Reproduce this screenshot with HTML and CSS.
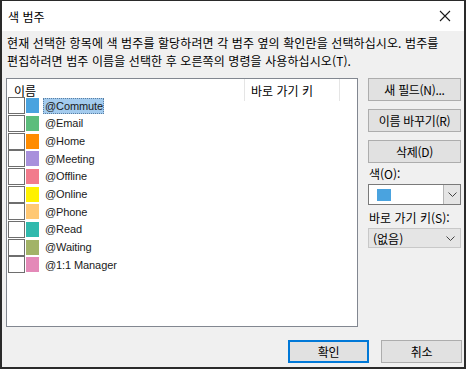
FILE: index.html
```html
<!DOCTYPE html>
<html lang="ko">

<head>
  <meta charset="UTF-8">
  <title>색 범주</title>
  <link rel="stylesheet" href="styles.css">
</head>

<body>
  <div class="dialog">
    <div class="titlebar">
      <div class="title">색 범주</div>
      <svg class="close" width="12" height="12" viewBox="0 0 12 12">
        <path d="M1 1 L11 11 M11 1 L1 11" stroke="#1a1a1a" stroke-width="1.1" fill="none"/>
      </svg>
    </div>

    <div class="content">
      <p class="desc">현재 선택한 항목에 색 범주를 할당하려면 각 범주 옆의 확인란을 선택하십시오. 범주를<br>편집하려면 범주 이름을 선택한 후 오른쪽의 명령을 사용하십시오(T).</p>

      <div class="main">
        <div class="list">
          <div class="list-head">
            <div class="col-name">이름</div>
            <div class="col-key">바로 가기 키</div>
            <div class="col-rest"></div>
          </div>
          <div class="rows">
            <div class="row"><span class="check"></span><span class="swatch c-blue"></span><span class="label selected">@Commute</span></div>
            <div class="row"><span class="check"></span><span class="swatch c-green"></span><span class="label">@Email</span></div>
            <div class="row"><span class="check"></span><span class="swatch c-orange"></span><span class="label">@Home</span></div>
            <div class="row"><span class="check"></span><span class="swatch c-purple"></span><span class="label">@Meeting</span></div>
            <div class="row"><span class="check"></span><span class="swatch c-red"></span><span class="label">@Offline</span></div>
            <div class="row"><span class="check"></span><span class="swatch c-yellow"></span><span class="label">@Online</span></div>
            <div class="row"><span class="check"></span><span class="swatch c-peach"></span><span class="label">@Phone</span></div>
            <div class="row"><span class="check"></span><span class="swatch c-teal"></span><span class="label">@Read</span></div>
            <div class="row"><span class="check"></span><span class="swatch c-olive"></span><span class="label">@Waiting</span></div>
            <div class="row"><span class="check"></span><span class="swatch c-pink"></span><span class="label">@1:1 Manager</span></div>
          </div>
        </div>

        <div class="side">
          <button class="btn">새 필드(N)...</button>
          <button class="btn">이름 바꾸기(R)</button>
          <button class="btn">삭제(D)</button>
          <div class="field-label">색(O):</div>
          <div class="combo">
            <div class="combo-field"><span class="combo-swatch"></span></div>
            <div class="combo-btn">
              <svg width="9" height="5" viewBox="0 0 9 5"><path d="M0.5 0.5 L4.5 4.5 L8.5 0.5" stroke="#444" fill="none"/></svg>
            </div>
          </div>
          <div class="field-label">바로 가기 키(S):</div>
          <div class="select">
            <span>(없음)</span>
            <svg width="9" height="5" viewBox="0 0 9 5"><path d="M0.5 0.5 L4.5 4.5 L8.5 0.5" stroke="#444" fill="none"/></svg>
          </div>
        </div>
      </div>

      <div class="footer">
        <button class="btn btn-default">확인</button>
        <button class="btn">취소</button>
      </div>
    </div>
  </div>
</body>

</html>
```

FILE: styles.css
```css
* {
  margin: 0;
  padding: 0;
  box-sizing: border-box;
}

body {
  font-family: "Noto Sans CJK KR", sans-serif;
  font-size: 12px;
  color: #000;
  background: #fff;
}

.dialog {
  width: 466px;
  height: 369px;
  border: 2px solid #2a2a2a;
  border-top-width: 1px;
  display: flex;
  flex-direction: column;
  background: #f0f0f0;
}

.titlebar {
  height: 30px;
  background: #fff;
  display: flex;
  align-items: center;
  justify-content: space-between;
  padding: 0 13px 0 6px;
}

.content {
  flex: 1;
  display: flex;
  flex-direction: column;
  padding: 3px 2px 0 4px;
}

.desc {
  line-height: 18px;
  padding-left: 1px;
  letter-spacing: 0.1px;
  white-space: nowrap;
}

.main {
  display: flex;
  margin-top: 8px;
  gap: 10px;
}

.list {
  width: 352px;
  height: 249px;
  background: #fff;
  border: 1px solid #828790;
}

.list-head {
  height: 22px;
  display: flex;
}

.list-head > div {
  display: flex;
  align-items: center;
  border-right: 1px solid #e5e5e5;
}

.col-name {
  width: 238px;
  padding-left: 7px;
}

.col-key {
  width: 95px;
  padding-left: 6px;
}

.list-head .col-rest {
  flex: 1;
  border-right: none;
}

.rows {
  margin-top: -4px;
}

.row {
  height: 17.67px;
  display: flex;
  align-items: center;
  padding-left: 1px;
}

.check {
  width: 17px;
  height: 17px;
  border: 1px solid #6e6e6e;
  background: #fff;
  flex-shrink: 0;
}

.swatch {
  width: 13px;
  height: 15px;
  margin-left: 1px;
  flex-shrink: 0;
}

.label {
  margin-left: 4px;
  padding: 0 1px 0 2px;
  line-height: 16px;
  font-family: "Liberation Sans", "Noto Sans CJK KR", sans-serif;
  font-size: 11px;
  letter-spacing: -0.1px;
  color: #1a1a1a;
}

.label.selected {
  background: #a3cbee;
  outline: 1px dotted #5a7fa3;
  outline-offset: -1px;
}

.c-blue { background: #4aa3df; }
.c-green { background: #5cbd7c; }
.c-orange { background: #ff8c00; }
.c-purple { background: #a890dc; }
.c-red { background: #f27b8c; }
.c-yellow { background: #fff100; }
.c-peach { background: #ffc874; }
.c-teal { background: #30b9ad; }
.c-olive { background: #a2b367; }
.c-pink { background: #e489b8; }

.side {
  width: 93px;
  display: flex;
  flex-direction: column;
}

.btn {
  height: 23px;
  background: #e1e1e1;
  border: 1px solid #adadad;
  font-family: "Noto Sans CJK KR", sans-serif;
  font-size: 12px;
  color: #000;
  letter-spacing: -0.3px;
}

.side .btn {
  width: 93px;
  margin-bottom: 8px;
}

.field-label {
  line-height: 14px;
  margin: -4px 0 3px 1px;
}

.combo {
  display: flex;
  height: 21px;
  border: 1px solid #7a7a7a;
  background: #fff;
  margin-bottom: 10px;
}

.combo-field {
  flex: 1;
  display: flex;
  align-items: center;
  padding-left: 8px;
}

.combo-swatch {
  width: 14px;
  height: 12px;
  background: #4aa3df;
}

.combo-btn {
  width: 17px;
  background: #e5e5e5;
  border-left: 1px solid #b5b5b5;
  display: flex;
  align-items: center;
  justify-content: center;
}

.select {
  height: 20px;
  display: flex;
  align-items: center;
  justify-content: space-between;
  padding: 0 5px 0 4px;
  background: #e5e5e5;
  border: 1px solid #c8c8c8;
}

.footer {
  display: flex;
  justify-content: flex-end;
  gap: 12px;
  margin-top: 13px;
}

.footer .btn {
  width: 81px;
}

.btn-default {
  border: 2px solid #0078d7;
}
```
